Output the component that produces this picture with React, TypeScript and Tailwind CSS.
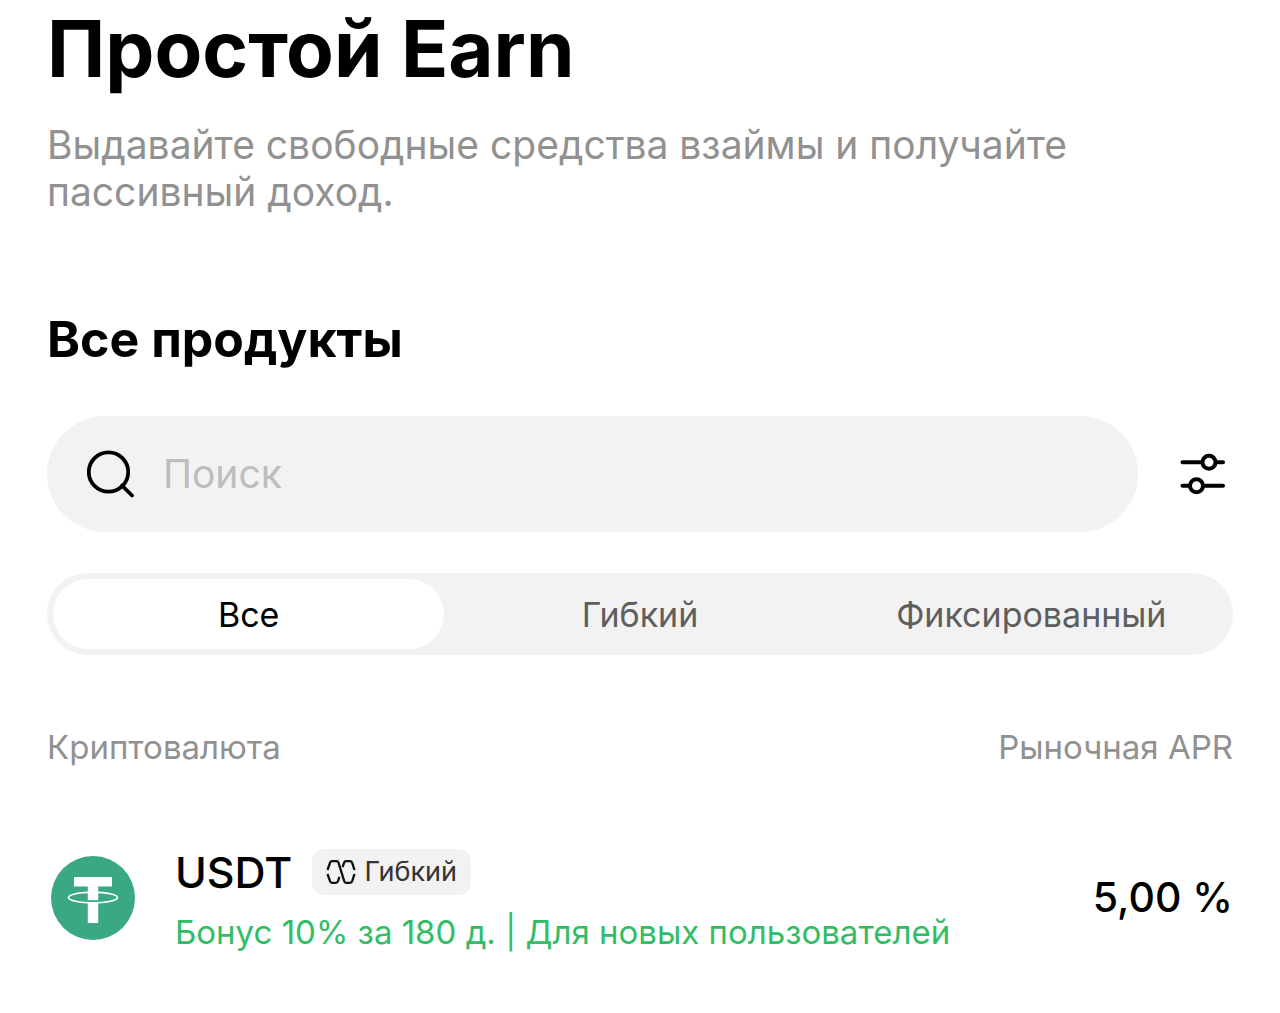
import { useState } from 'react';

const tabs = ['Все', 'Гибкий', 'Фиксированный'];

const products = [
    {
        symbol: 'USDT',
        term: 'Гибкий',
        bonus: 'Бонус 10% за 180 д. | Для новых пользователей',
        apr: '5,00 %',
    },
];

function SearchIcon() {
    return (
        <svg viewBox="0 0 48 48" className="size-12 shrink-0" fill="none" stroke="#000" strokeWidth="3.8" aria-hidden="true">
            <circle cx="21.5" cy="22" r="19.7" />
            <path d="M35 35.500L45 45.500" strokeLinecap="round" />
        </svg>
    );
}

function FilterIcon() {
    return (
        <svg viewBox="0 0 46 42" className="h-[42px] w-[46px]" fill="none" stroke="#000" strokeWidth="4" strokeLinecap="round" aria-hidden="true">
            <path d="M2.500 9.300H22M36 9.300H43" />
            <circle cx="29" cy="9.300" r="6.500" />
            <path d="M2.500 32.700H10M24 32.700H43" />
            <circle cx="16.500" cy="32.700" r="6.500" />
        </svg>
    );
}

function TetherIcon() {
    return (
        <svg viewBox="0 0 84 84" className="size-[84px] shrink-0" aria-hidden="true">
            <circle cx="42" cy="42" r="42" fill="#3aa981" />
            <path d="M23 21H61V30.500H47.200V67H36.800V30.500H23Z" fill="#fff" />
            <path d="M36.500 44Q42 44.600 47.500 44V46.200H36.500Z" fill="#3aa981" />
            <ellipse cx="42" cy="41.500" rx="24.500" ry="5.300" fill="none" stroke="#fff" strokeWidth="1.7" />
        </svg>
    );
}

function FlexibleIcon() {
    return (
        <svg viewBox="0 0 30 24" className="h-6 w-[30px] shrink-0" fill="none" stroke="#111" strokeWidth="2.3" aria-hidden="true">
            <path d="M1.500 10L4 2.800Q4.600 1.200 6.200 1.200H10.500Q12 1.200 12.600 2.800L18.200 21.200Q18.800 22.800 20.200 22.800H24Q25.600 22.800 26.200 21.200L28.500 14" />
            <path d="M1.500 14L4 21.200Q4.600 22.800 6.200 22.800H9.800Q11.400 22.800 12 21.200L13.400 16.800" />
            <path d="M16.600 7.200L18 2.800Q18.600 1.200 20.200 1.200H24Q25.600 1.200 26.200 2.800L28.500 10" />
        </svg>
    );
}

export default function App() {
    const [active, setActive] = useState('Все');

    return (
        <main className="bg-white px-[47px] pt-[7px] pb-14 font-['Inter','Liberation_Sans',sans-serif] text-black">
            <h1 className="text-[78px] leading-[84px] font-bold">Простой Earn</h1>
            <p className="mt-[30px] max-w-[1100px] text-[39px] leading-[47px] text-[#919191]">
                Выдавайте свободные средства взаймы и получайте пассивный доход.
            </p>

            <section>
                <h2 className="mt-[92px] text-[50px] leading-[64px] font-bold">Все продукты</h2>

                <div className="mt-[45px] flex items-center gap-[42px]">
                    <label className="flex h-[116px] flex-1 items-center gap-7 rounded-full bg-[#f2f2f2] px-10">
                        <SearchIcon />
                        <input
                            type="search"
                            aria-label="Поиск"
                            placeholder="Поиск"
                            className="min-w-0 flex-1 bg-transparent text-[39px] outline-none placeholder:text-[#bdbdbd]"
                        />
                    </label>
                    <button type="button" aria-label="Фильтры" className="mr-[7px]">
                        <FilterIcon />
                    </button>
                </div>

                <div className="mt-[41px] grid h-[82px] grid-cols-3 rounded-full bg-[#f2f2f2] p-1.5">
                    {tabs.map((tab) => (
                        <button
                            key={tab}
                            type="button"
                            aria-pressed={tab === active}
                            onClick={() => setActive(tab)}
                            className={`rounded-full text-[34px] ${tab === active ? 'bg-white text-black' : 'text-[#5e5e5e]'}`}
                        >
                            {tab}
                        </button>
                    ))}
                </div>

                <table className="mt-[68px] w-full">
                    <thead>
                        <tr className="text-[33px] leading-[48px] text-[#919191]">
                            <th className="text-left font-normal">Криптовалюта</th>
                            <th className="text-right font-normal">Рыночная APR</th>
                        </tr>
                    </thead>
                    <tbody>
                        {products.map((product) => (
                            <tr key={product.symbol}>
                                <td className="pt-[75px]">
                                    <div className="flex items-center gap-10 pl-1">
                                        <TetherIcon />
                                        <div>
                                            <div className="flex items-center gap-5">
                                                <span className="text-[43px] leading-[52px] font-medium">{product.symbol}</span>
                                                <span className="flex h-[46px] items-center gap-2 rounded-xl bg-[#f2f2f2] px-3.5 text-[27px] text-[#333]">
                                                    <FlexibleIcon />
                                                    {product.term}
                                                </span>
                                            </div>
                                            <p className="mt-4 text-[33px] leading-9 text-[#31bd65]">{product.bonus}</p>
                                        </div>
                                    </div>
                                </td>
                                <td className="pt-[75px] text-right text-[41px] font-medium">{product.apr}</td>
                            </tr>
                        ))}
                    </tbody>
                </table>
            </section>
        </main>
    );
}
